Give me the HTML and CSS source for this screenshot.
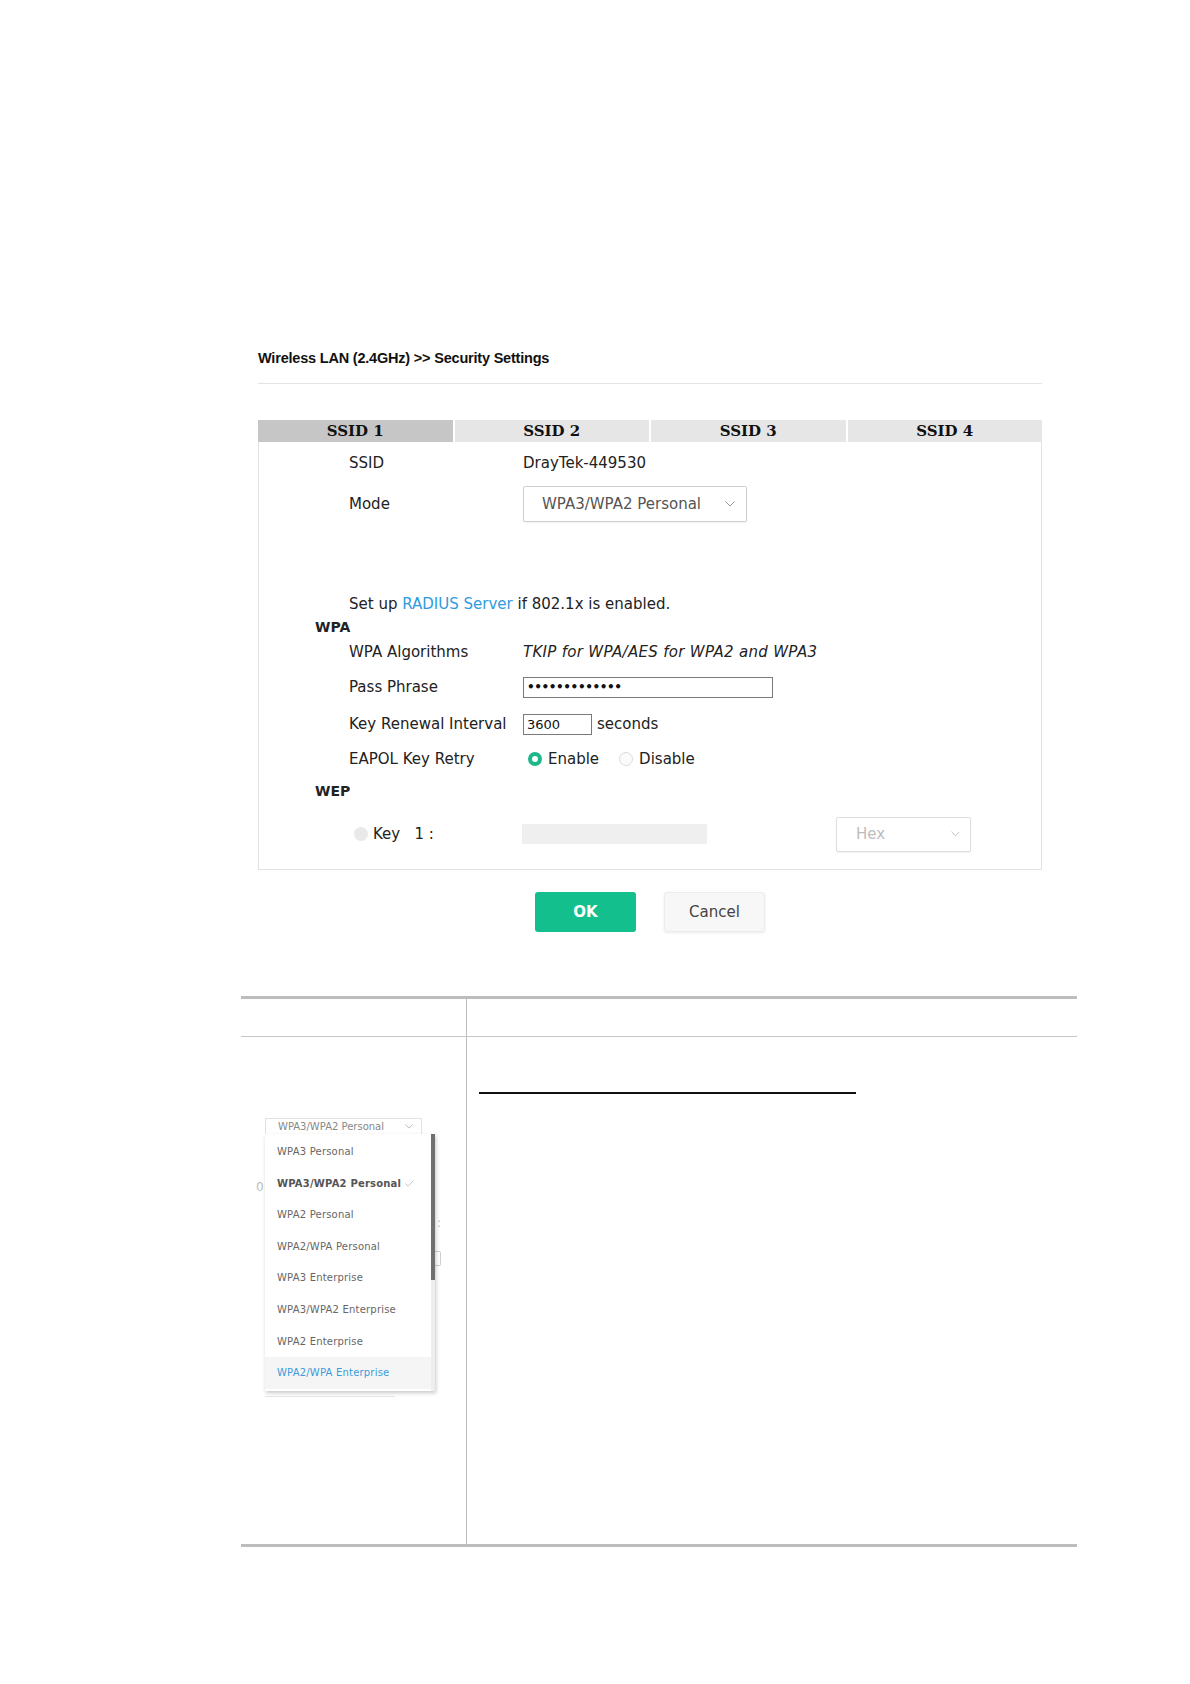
FILE: index.html
```html
<!DOCTYPE html>
<html>
<head>
	<title>Security Settings</title>
	<link rel="stylesheet" href="styles.css">
</head>
<body>
	<div class="page">
		<div class="screen">
			<h1 class="crumb">Wireless LAN (2.4GHz) &gt;&gt; Security Settings</h1>
			<div class="rule"></div>

			<div class="tabs">
				<div class="tab active">SSID 1</div>
				<div class="tab">SSID 2</div>
				<div class="tab">SSID 3</div>
				<div class="tab">SSID 4</div>
			</div>

			<div class="panel">
				<div class="row r-ssid">
					<span class="label">SSID</span>
					<span class="value">DrayTek-449530</span>
				</div>
				<div class="row r-mode">
					<span class="label">Mode</span>
					<div class="select mode-select">
						<span>WPA3/WPA2 Personal</span>
						<svg class="chev" width="10" height="6" viewBox="0 0 10 6"><polyline points="0.5,0.5 5,5 9.5,0.5" fill="none" stroke="#9a9a9a" stroke-width="1"/></svg>
					</div>
				</div>
				<div class="spacer"></div>
				<div class="row r-note">
					<span class="note">Set up <a href="#" class="link">RADIUS Server</a> if 802.1x is enabled.</span>
				</div>
				<div class="row r-head"><span class="heading">WPA</span></div>
				<div class="row r-alg">
					<span class="label">WPA Algorithms</span>
					<span class="value italic">TKIP for WPA/AES for WPA2 and WPA3</span>
				</div>
				<div class="row r-pass">
					<span class="label">Pass Phrase</span>
					<input class="field pass" type="text" value="•••••••••••••">
				</div>
				<div class="row r-renew">
					<span class="label">Key Renewal Interval</span>
					<input class="field short" type="text" value="3600">
					<span class="unit">seconds</span>
				</div>
				<div class="row r-eapol">
					<span class="label">EAPOL Key Retry</span>
					<span class="radio on"></span><span class="opt">Enable</span>
					<span class="radio off"></span><span class="opt">Disable</span>
				</div>
				<div class="row r-wep"><span class="heading">WEP</span></div>
				<div class="row r-key">
					<span class="keylabel"><span class="radio dis"></span>Key&nbsp;&nbsp;&nbsp;1 :</span>
					<span class="keyfield"></span>
					<div class="select hex-select">
						<span>Hex</span>
						<svg class="chev" width="9" height="6" viewBox="0 0 10 6"><polyline points="0.5,0.5 5,5 9.5,0.5" fill="none" stroke="#b5b5b5" stroke-width="1"/></svg>
					</div>
				</div>
			</div>

			<div class="actions">
				<button class="btn ok">OK</button>
				<button class="btn cancel">Cancel</button>
			</div>
		</div>

		<div class="doc">
			<div class="doc-head left"></div>
			<div class="doc-head"></div>
			<div class="doc-cell left">
				<div class="snap">
					<span class="ghost g1">0:</span>
					<span class="ghost g2">:</span>
					<span class="ghost g3"></span>
					<div class="snap-select">
						<span>WPA3/WPA2 Personal</span>
						<svg class="chev" width="8" height="5" viewBox="0 0 10 6"><polyline points="0.5,0.5 5,5 9.5,0.5" fill="none" stroke="#aaa" stroke-width="1"/></svg>
					</div>
					<ul class="snap-list">
						<li>WPA3 Personal</li>
						<li class="chosen">WPA3/WPA2 Personal <svg width="9" height="7" viewBox="0 0 9 7"><polyline points="0.5,3.5 3.2,6.2 8.5,0.5" fill="none" stroke="#c4c4c4" stroke-width="1"/></svg></li>
						<li>WPA2 Personal</li>
						<li>WPA2/WPA Personal</li>
						<li>WPA3 Enterprise</li>
						<li>WPA3/WPA2 Enterprise</li>
						<li>WPA2 Enterprise</li>
						<li class="hover">WPA2/WPA Enterprise</li>
					</ul>
					<div class="snap-base"></div>
				</div>
			</div>
			<div class="doc-cell">
				<div class="blackline"></div>
			</div>
		</div>
	</div>
</body>
</html>
```

FILE: styles.css
```css
*{
	margin: 0;
	padding: 0;
	box-sizing: border-box;
}
body{
	background: #fff;
	font-family: "DejaVu Sans", Verdana, sans-serif;
	font-size: 15px;
	color: #222;
}
.page{
	width: 1190px;
	height: 1684px;
	overflow: hidden;
}

/* router screenshot */
.screen{
	width: 784px;
	margin-left: 258px;
	padding-top: 348px;
}
.crumb{
	font-family: "Liberation Sans Narrow", "Liberation Sans", Arial, sans-serif;
	font-size: 14.5px;
	font-weight: bold;
	letter-spacing: -0.2px;
	line-height: 20px;
	color: #111;
}
.rule{
	height: 1px;
	background: #e3e3e3;
	margin-top: 15px;
}
.tabs{
	display: flex;
	margin-top: 36px;
	height: 22px;
}
.tab{
	flex: 1;
	background: #e6e6e6;
	text-align: center;
	font-family: "DejaVu Serif", "Liberation Serif", serif;
	font-weight: bold;
	font-size: 15px;
	line-height: 23px;
	color: #111;
	border-left: 2px solid #fff;
}
.tab:first-child{
	border-left: 0;
}
.tab.active{
	background: #c6c6c6;
}
.panel{
	border: 1px solid #e2e2e2;
	border-top: 0;
	padding-left: 90px;
	padding-bottom: 4px;
}
.row{
	display: flex;
	align-items: center;
}
.label{
	width: 174px;
	flex: none;
}
.r-ssid{ height: 41px; }
.r-mode{ height: 41px; }
.spacer{ height: 69px; }
.r-note{ height: 22px; }
.r-head{ height: 24px; }
.r-alg{ height: 26px; }
.r-pass{ height: 44px; }
.r-renew{ height: 30px; }
.r-eapol{ height: 40px; }
.r-wep{ height: 24px; }
.r-key{ height: 62px; }

.heading{
	font-weight: bold;
	font-size: 14px;
	margin-left: -34px;
}
.italic{
	font-style: italic;
	letter-spacing: 0.3px;
}
.link{
	color: #2f9be0;
	text-decoration: none;
}
.select{
	display: flex;
	align-items: center;
	justify-content: space-between;
	border: 1px solid #cfcfcf;
	border-radius: 2px;
	background: #fff;
	box-shadow: 0 1px 2px rgba(0,0,0,0.06);
}
.mode-select{
	width: 224px;
	height: 36px;
	padding: 0 11px 0 18px;
	color: #555;
}
.field{
	font-family: "DejaVu Sans", sans-serif;
	border: 1px solid #7a7a7a;
	height: 21px;
	padding: 0 3px;
	outline: none;
	color: #111;
}
.pass{
	width: 250px;
	font-size: 12px;
	letter-spacing: -0.4px;
	font-weight: bold;
}
.short{
	width: 69px;
	font-size: 13px;
}
.unit{
	margin-left: 5px;
}
.radio{
	display: inline-block;
	width: 14px;
	height: 14px;
	border-radius: 50%;
	flex: none;
}
.radio.on{
	border: 4px solid #1db88a;
	background: #fff;
	margin-left: 5px;
}
.radio.off{
	border: 1px solid #dcdcdc;
	background: #fbfbfb;
	margin-left: 20px;
}
.radio.dis{
	background: #e9e9e9;
	margin-right: 5px;
}
.opt{
	margin-left: 6px;
}
.keylabel{
	display: flex;
	align-items: center;
	width: 174px;
	padding-left: 6px;
	margin-left: -1px;
}
.keyfield{
	width: 185px;
	height: 20px;
	background: #efefef;
}
.hex-select{
	width: 135px;
	height: 35px;
	margin-left: 129px;
	padding: 0 10px 0 19px;
	color: #bdbdbd;
	border-color: #dedede;
}
.actions{
	display: flex;
	justify-content: center;
	gap: 28px;
	margin-top: 22px;
}
.btn{
	width: 101px;
	height: 40px;
	border-radius: 3px;
	font-family: "DejaVu Sans", sans-serif;
	font-size: 15px;
}
.btn.ok{
	background: #13bf8c;
	border: 0;
	color: #fff;
	font-weight: bold;
}
.btn.cancel{
	background: #f7f7f7;
	border: 1px solid #ececec;
	color: #444;
	box-shadow: 0 1px 3px rgba(0,0,0,0.08);
}

/* manual table */
.doc{
	display: grid;
	grid-template-columns: 226px 1fr;
	grid-template-rows: 38px 507px;
	width: 836px;
	margin: 64px 0 0 241px;
	border-top: 3px solid #bdbdbd;
	border-bottom: 3px solid #bdbdbd;
}
.doc-head{
	border-bottom: 1px solid #c6c6c6;
}
.left{
	border-right: 1px solid #bdbdbd;
}
.blackline{
	width: 377px;
	height: 2px;
	background: #111;
	margin: 55px 0 0 12px;
}
.snap{
	position: relative;
	width: 170px;
	margin: 81px 0 0 24px;
	font-size: 10px;
	color: #666;
}
.ghost{
	position: absolute;
	color: #bbb;
	font-size: 12px;
}
.g1{ left: -9px; top: 62px; }
.g2{ left: 172px; top: 98px; }
.g3{
	left: 166px;
	top: 133px;
	width: 10px;
	height: 15px;
	border: 1px solid #cfcfcf;
	border-left: 0;
	border-radius: 0 2px 2px 0;
}
.snap-select{
	display: flex;
	align-items: center;
	justify-content: space-between;
	width: 157px;
	height: 16px;
	border: 1px solid #e2e2e2;
	border-bottom: 0;
	padding: 0 8px 0 12px;
	color: #888;
}
.snap-list{
	position: relative;
	list-style: none;
	height: 257px;
	background: #fff;
	box-shadow: 1px 2px 4px rgba(0,0,0,0.22);
	padding-top: 2px;
	border-right: 4px solid #eeeeee;
}
.snap-list::after{
	content: "";
	position: absolute;
	top: 0;
	right: -4px;
	width: 4px;
	height: 146px;
	background: #707070;
}
.snap-list li{
	height: 31.6px;
	line-height: 31px;
	padding-left: 12px;
	letter-spacing: 0.2px;
}
.snap-list li.chosen{
	font-weight: bold;
	color: #555;
}
.snap-list li.hover{
	background: #f5f5f5;
	color: #3a9bdc;
}
.snap-base{
	width: 130px;
	height: 6px;
	border-bottom: 1px solid #e6e6e6;
}
```
